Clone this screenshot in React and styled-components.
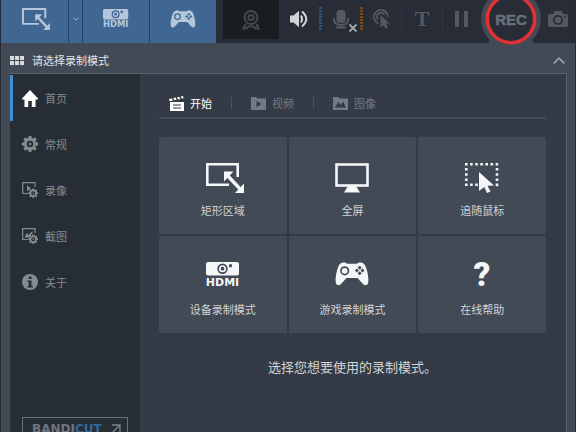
import { useState } from "react";
import styled, { createGlobalStyle } from "styled-components";

const GlobalStyle = createGlobalStyle`
* { box-sizing: border-box; }
body {
margin: 0;
background: #262c35;
overflow: hidden;
}
button {
border: 0;
padding: 0;
background: none;
color: inherit;
font: inherit;
cursor: pointer;
}
svg { display: block; flex: none; overflow: visible; }
`;

/* ---------- icons ---------- */

const RegionIcon = ({ width = 42, height = 30 }) => (
  <svg width={width} height={height} viewBox="-4 0 42 30" fill="none" stroke="currentColor" strokeWidth="2.6">
    <path d="M23 21.700H1.300V1.300H31.700V14" />
    <path d="M21 12L35 27" strokeWidth="3.400" />
    <path d="M18 8.500H27.500L18 18.500ZM38 30H29L38 20.500Z" fill="currentColor" stroke="none" />
  </svg>
);

const HdmiIcon = ({ width = 34, height = 26 }) => (
  <svg width={width} height={height} viewBox="0 0 34 26" fill="currentColor">
    <path
      fillRule="evenodd"
      d="M2 0H31A2 2 0 0 1 33 2V11.500A2 2 0 0 1 31 13.500H2A2 2 0 0 1 0 11.500V2A2 2 0 0 1 2 0ZM16.500 1.500A5.200 5.200 0 1 0 16.500 11.900A5.200 5.200 0 1 0 16.500 1.500ZM24.500 2A1.700 1.700 0 1 0 24.500 5.400A1.700 1.700 0 1 0 24.500 2Z"
    />
    <circle cx="16.500" cy="6.700" r="2.700" fill="none" stroke="currentColor" strokeWidth="1.700" />
    <text x="16.500" y="24" fontSize="11" fontWeight="700" textAnchor="middle" fontFamily="'DejaVu Sans', sans-serif">
      HDMI
    </text>
  </svg>
);

const GamepadIcon = ({ width = 34, height = 24 }) => (
  <svg width={width} height={height} viewBox="0 0 34 24" fill="currentColor">
    <path
      fillRule="evenodd"
      d="M8 .5C9.500 .2 11 .6 12 1.800H22C23 .6 24.500 .2 26 .5C28.500 1 30 2.500 31 5.500C32.500 10 34 16 33.200 20.500C32.700 23.500 30 24 28 22L22.500 16H11.500L6 22C4 24 1.300 23.500 .8 20.500C0 16 1.500 10 3 5.500C4 2.500 5.500 1 8 .5ZM9.700 4.200A4.600 4.600 0 1 0 9.700 13.400A4.600 4.600 0 1 0 9.700 4.200ZM24.700 3.700L22.700 5.700L24.700 7.700L26.700 5.700ZM24.700 9.300L22.700 11.300L24.700 13.300L26.700 11.300ZM21.900 6.500L19.900 8.500L21.900 10.500L23.900 8.500ZM27.500 6.500L25.500 8.500L27.500 10.500L29.500 8.500Z"
    />
    <circle cx="9.700" cy="8.800" r="2.900" />
  </svg>
);

const MonitorIcon = () => (
  <svg width="34" height="30" viewBox="0 0 34 30" fill="currentColor">
    <rect x="1.500" y="1.500" width="31" height="21" fill="none" stroke="currentColor" strokeWidth="2.600" />
    <path d="M13 23H21L25 29.500H9Z" />
  </svg>
);

const FollowIcon = () => (
  <svg width="34" height="30" viewBox="0 0 34 30" fill="currentColor">
    <path
      d="M0 1.300H34M0 21.700H14"
      fill="none"
      stroke="currentColor"
      strokeWidth="2.600"
      strokeDasharray="2.600 2.500"
    />
    <path d="M1.300 5V20M32 5V24" fill="none" stroke="currentColor" strokeWidth="2.600" strokeDasharray="2.600 2.600" />
    <path d="M14 9L29 22.500L22.500 22.800L25.500 28.500L22 30L19.300 24L14 28Z" />
  </svg>
);

const HelpIcon = () => (
  <svg width="34" height="30" viewBox="0 0 34 30" fill="currentColor">
    <text x="17" y="24" fontSize="33" fontWeight="900" textAnchor="middle" fontFamily="Roboto, 'DejaVu Sans', sans-serif">
      ?
    </text>
  </svg>
);

const WebcamIcon = () => (
  <svg width="18" height="20" viewBox="0 0 18 20" fill="none" stroke="currentColor" strokeWidth="2">
    <circle cx="9" cy="7.500" r="6.500" />
    <circle cx="9" cy="7.500" r="2.600" />
    <path d="M3.500 14L1.500 18.500H4.500L6.500 16.500H11.500L13.500 18.500H16.500L14.500 14" />
  </svg>
);

const SpeakerIcon = () => (
  <svg width="18" height="18" viewBox="0 0 18 18" fill="none" stroke="currentColor" strokeWidth="2">
    <path d="M0 5.500H3.500L9 .8V17.200L3.500 12.500H0Z" fill="currentColor" stroke="none" />
    <path d="M11 5.500Q13.200 9 11 12.500M12 1.500Q20.500 9 12 16.500" />
  </svg>
);

const MicIcon = () => (
  <svg width="38" height="36" viewBox="0 0 38 36" fill="none" stroke="currentColor" strokeWidth="2">
    <rect x="14.500" y="9" width="9" height="13" rx="3.500" fill="currentColor" stroke="none" />
    <path d="M12 17V19Q12.500 24 19 24Q25.500 24 26 19V17M19 24V27M14 26.500H24" />
    <path d="M27.500 23.500L34.500 30.500M34.500 23.500L27.500 30.500" stroke="#a3a7ad" strokeWidth="1.800" />
  </svg>
);

const ClickIcon = () => (
  <svg width="18" height="20" viewBox="0 0 18 20" fill="none" stroke="currentColor" strokeWidth="1.800">
    <path d="M5.500 14.500A7 7 0 1 1 15 8" />
    <path d="M5 10.500A4 4 0 1 1 11.500 6" />
    <path d="M7.500 6L16.500 14.500L13 14.800L15 18.500L12.500 19.500L10.800 16L7.500 18.500Z" fill="currentColor" stroke="none" />
  </svg>
);

const PauseIcon = () => (
  <svg width="14" height="16" viewBox="0 0 14 16" fill="currentColor">
    <path d="M0 0H4V16H0ZM9 0H13V16H9Z" />
  </svg>
);

const CameraIcon = () => (
  <svg width="20" height="16" viewBox="0 0 20 16" fill="currentColor">
    <path
      fillRule="evenodd"
      d="M2 3H5L6.500 0H13.500L15 3H18Q20 3 20 5V14Q20 16 18 16H2Q0 16 0 14V5Q0 3 2 3ZM10 4A5 5 0 1 0 10 14A5 5 0 1 0 10 4ZM17 4.500A1 1 0 1 0 17 6.500A1 1 0 1 0 17 4.500Z"
    />
    <circle cx="10" cy="9" r="3.200" />
  </svg>
);

const RecRing = () => (
  <svg width="60" height="60" viewBox="0 0 60 60">
    <circle cx="30" cy="30" r="30" fill="#424a56" />
    <path d="M4 56Q10 53 8 48H52Q50 53 56 56Z" fill="#424a56" />
    <circle cx="30" cy="30" r="23.700" fill="#272c36" stroke="#df3233" strokeWidth="3.600" />
    <text
      x="30"
      y="36"
      fontSize="15"
      fontWeight="700"
      fill="#68707a"
      stroke="#68707a"
      strokeWidth=".5"
      textAnchor="middle"
      fontFamily="'Liberation Sans', Arial, sans-serif"
    >
      REC
    </text>
  </svg>
);

const GridIcon = () => (
  <svg width="14" height="9" viewBox="0 0 14 9" fill="#d9dcdf">
    <path d="M0 0H4V4H0ZM5 0H9V4H5ZM10 0H14V4H10ZM0 5H4V9H0ZM5 5H9V9H5ZM10 5H14V9H10Z" />
  </svg>
);

const HomeIcon = () => (
  <svg width="16" height="17" viewBox="0 0 16 17" fill="#fff">
    <path d="M8 0L16 8.500V9.500H13.500V17H9.800V11H6.200V17H2.500V9.500H0V8.500Z" />
  </svg>
);

const gearTeeth = [0, 45, 90, 135, 180, 225, 270, 315];

const Gear = ({ cx, cy, size }) => (
  <g transform={`translate(${cx} ${cy}) scale(${size})`} stroke="none" fill="currentColor">
    <path
      fillRule="evenodd"
      d="M0 -6A6 6 0 1 0 0 6A6 6 0 1 0 0 -6ZM0 -3.300A3.300 3.300 0 1 1 0 3.300A3.300 3.300 0 1 1 0 -3.300Z"
    />
    {gearTeeth.map((angle) => (
      <path key={angle} d="M-1.400 -8H1.400L1.900 -5H-1.900Z" transform={`rotate(${angle})`} />
    ))}
    <circle r="1.300" />
  </g>
);

const GearIcon = () => (
  <svg width="16" height="16" viewBox="0 0 16 16">
    <Gear cx={8} cy={8} size={1} />
  </svg>
);

const VideoSettingsIcon = () => (
  <svg width="16" height="16" viewBox="0 0 16 16" fill="none" stroke="currentColor">
    <path d="M6 11.500H.7V.7H13V5" strokeWidth="1.200" />
    <path d="M5 3.200L9 6.200L5 9.200Z" fill="currentColor" stroke="none" />
    <Gear cx={11.200} cy={11.200} size={0.6} />
  </svg>
);

const ImageSettingsIcon = () => (
  <svg width="16" height="16" viewBox="0 0 16 16" fill="none" stroke="currentColor">
    <path d="M6 11.500H.7V.7H13V5" strokeWidth="1.200" />
    <path d="M2.500 9.500L4.500 5L6.500 7L10.500 2.800V5L7 9.500Z" fill="currentColor" stroke="none" />
    <Gear cx={11.200} cy={11.200} size={0.6} />
  </svg>
);

const InfoIcon = () => (
  <svg width="16" height="16" viewBox="0 0 16 16">
    <circle cx="8" cy="8" r="8" fill="currentColor" />
    <path d="M6.700 2.500H9.500V5H6.700ZM5.500 6.500H9.500V12H10.800V13.500H5.500V12H6.700V8H5.500Z" fill="#272d35" />
  </svg>
);

const ClapperIcon = () => (
  <svg width="15" height="15" viewBox="0 0 15 15" fill="currentColor">
    <path fillRule="evenodd" d="M1 6H15V15H1ZM4 8.500V9.500H12V8.500ZM4 11.500V12.500H12V11.500Z" />
    <path d="M0 3L3 2.400L4 4.600L.6 5.300ZM4.300 2.100L6.500 1.600L7.800 3.800L5.400 4.300ZM8 1.300L10.200 .8L11.500 3L9.200 3.500ZM11.700 .5L14 0L14.500 2.300L13 2.700Z" />
  </svg>
);

const VideoFolderIcon = () => (
  <svg width="15" height="13" viewBox="0 0 15 13" fill="currentColor">
    <path fillRule="evenodd" d="M0 0H5L6.500 1.500H15V13H0ZM5.500 3.800V10.200L10.500 7Z" />
  </svg>
);

const ImageFolderIcon = () => (
  <svg width="15" height="13" viewBox="0 0 15 13" fill="currentColor">
    <path fillRule="evenodd" d="M0 0H5L6.500 1.500H15V13H0ZM2 10.500H13L10 4.500L7.800 8L5.200 5Z" />
  </svg>
);

const OpenIcon = () => (
  <svg width="10" height="10" viewBox="0 0 10 10" fill="none" stroke="#7d838b" strokeWidth="1.300">
    <path d="M1 1H9V9M9 1L1 9" />
  </svg>
);

const Chevron = ({ up, width, height }) => (
  <svg width={width} height={height} viewBox="0 0 10 6" fill="none" stroke="currentColor" strokeWidth="1.500">
    <path d={up ? "M.5 5.500L5 1L9.500 5.500" : "M1 1L5 5L9 1"} />
  </svg>
);

/* ---------- data ---------- */

const menu = [
  { label: "首页", icon: <HomeIcon /> },
  { label: "常规", icon: <GearIcon /> },
  { label: "录像", icon: <VideoSettingsIcon /> },
  { label: "截图", icon: <ImageSettingsIcon /> },
  { label: "关于", icon: <InfoIcon /> },
];

const tabs = [
  { label: "开始", icon: <ClapperIcon /> },
  { label: "视频", icon: <VideoFolderIcon /> },
  { label: "图像", icon: <ImageFolderIcon /> },
];

const modes = [
  { label: "矩形区域", icon: <RegionIcon /> },
  { label: "全屏", icon: <MonitorIcon /> },
  { label: "追随鼠标", icon: <FollowIcon /> },
  { label: "设备录制模式", icon: <HdmiIcon /> },
  { label: "游戏录制模式", icon: <GamepadIcon /> },
  { label: "在线帮助", icon: <HelpIcon /> },
];

function App() {
  const [page, setPage] = useState("首页");
  const [tab, setTab] = useState("开始");

  return (
    <AppStyled>
      <GlobalStyle />
      <Toolbar>
        <ModeButtons>
          <ModeButton $width={67} aria-label="矩形区域"><RegionIcon width={31} height={22} /></ModeButton>
          <ModeButton $width={13} aria-label="更多"><Chevron width={6} height={4} /></ModeButton>
          <ModeButton $width={66} aria-label="设备录制模式"><HdmiIcon width={26} height={20} /></ModeButton>
          <ModeButton $width={66} aria-label="游戏录制模式"><GamepadIcon width={26} height={18} /></ModeButton>
        </ModeButtons>
        <WebcamButton aria-label="摄像头"><WebcamIcon /></WebcamButton>
        <ToolButton $width={40} $bright aria-label="扬声器"><SpeakerIcon /></ToolButton>
        <Meter $color="#285680" />
        <ToolButton $width={38} aria-label="麦克风"><MicIcon /></ToolButton>
        <Meter $color="#7b4a16" />
        <ToolButton $width={38} aria-label="鼠标效果"><ClickIcon /></ToolButton>
        <ToolDivider />
        <TextButton $width={40}>T</TextButton>
        <ToolDivider />
        <ToolButton $width={38} aria-label="暂停"><PauseIcon /></ToolButton>
        <Spacer />
        <RecButton aria-label="REC"><RecRing /></RecButton>
        <ToolButton $width={34} aria-label="截图"><CameraIcon /></ToolButton>
      </Toolbar>

      <PanelHeader>
        <GridIcon />
        <PanelTitle>请选择录制模式</PanelTitle>
        <CollapseButton aria-label="收起"><Chevron up width={12} height={7} /></CollapseButton>
      </PanelHeader>

      <PanelBody>
        <Sidebar>
          {menu.map((item) => (
            <MenuItem key={item.label} $active={item.label === page} onClick={() => setPage(item.label)}>
              {item.icon}
              {item.label}
            </MenuItem>
          ))}
          <Bandicut href="#bandicut">
            <span>BANDI<Cut>CUT</Cut></span>
            <OpenIcon />
          </Bandicut>
        </Sidebar>

        <Content>
          <Tabs>
            {tabs.map((item) => (
              <Tab key={item.label} $active={item.label === tab} onClick={() => setTab(item.label)}>
                {item.icon}
                {item.label}
              </Tab>
            ))}
          </Tabs>
          <ModeGrid>
            {modes.map((mode) => (
              <ModeTile key={mode.label}>
                <TileIcon>{mode.icon}</TileIcon>
                {mode.label}
              </ModeTile>
            ))}
          </ModeGrid>
          <Hint>选择您想要使用的录制模式。</Hint>
        </Content>
      </PanelBody>
    </AppStyled>
  );
}

const AppStyled = styled.div`
height: 100vh;
overflow: hidden;
border: solid #242a33;
border-width: 0 1px;
background: #424a56;
color: #d0d3d7;
font: 11px/16px "Noto Sans CJK SC", sans-serif;
`;
const Toolbar = styled.header`
display: flex;
align-items: center;
height: 43px;
padding-bottom: 6px;
background: #272c36;
color: #535962;
`;
const ModeButtons = styled.div`
display: flex;
align-self: flex-start;
gap: 1px;
height: 43px;
margin-right: 7px;
background: #27405f;
`;
const ModeButton = styled.button`
display: flex;
align-items: center;
justify-content: center;
width: ${(props) => props.$width}px;
padding-bottom: 6px;
background: #406692;
color: #b4c6d9;
`;
const ToolButton = styled.button`
display: flex;
align-items: center;
justify-content: center;
flex: none;
width: ${(props) => props.$width}px;
height: 36px;
color: ${(props) => (props.$bright ? "#d2d5d8" : "inherit")};
`;
const TextButton = styled(ToolButton)`
font: bold 22px/36px "Liberation Serif", serif;
`;
const WebcamButton = styled.button`
display: flex;
align-items: center;
justify-content: center;
align-self: flex-start;
width: 56px;
height: 39px;
background: #191c20;
color: #464a50;
`;
const Meter = styled.span`
width: 3px;
height: 24px;
background: repeating-linear-gradient(${(props) => props.$color} 0 2px, #272c36 2px 3px);
`;
const ToolDivider = styled.span`
width: 1px;
height: 24px;
background: #30363f;
`;
const Spacer = styled.span`
flex: 1;
`;
const RecButton = styled.button`
flex: none;
margin: -12px 0;
border-radius: 50%;
`;
const PanelHeader = styled.div`
display: flex;
align-items: center;
gap: 8px;
height: 30px;
padding: 4px 10px 0 9px;
`;
const PanelTitle = styled.h1`
flex: 1;
margin: 0;
font-size: 11px;
font-weight: 400;
color: #e0e2e4;
`;
const CollapseButton = styled.button`
color: #9aa1aa;
`;
const PanelBody = styled.div`
display: flex;
margin: 0 8px 0 9px;
border: solid #58616d;
border-width: 1px 1px 0 0;
background: #343b46;
`;
const Sidebar = styled.nav`
display: flex;
flex-direction: column;
flex: none;
width: 130px;
padding: 1px 0 20px;
background: #272d35;
`;
const MenuItem = styled.button`
display: flex;
align-items: center;
gap: 7px;
height: 46px;
padding-left: 9px;
border-left: 3px solid ${(props) => (props.$active ? "#3f8fd2" : "transparent")};
color: #858b93;
`;
const Bandicut = styled.a`
display: flex;
align-items: center;
justify-content: space-between;
height: 23px;
margin: 112px 12px 0;
padding: 0 6px 0 9px;
border: 1px solid #6b7179;
color: #70767e;
font: bold 12px/16px "DejaVu Sans", sans-serif;
text-decoration: none;
`;
const Cut = styled.span`
color: #33689c;
`;
const Content = styled.main`
flex: 1;
padding: 20px 20px 0 19px;
`;
const Tabs = styled.div`
display: flex;
gap: 19px;
height: 25px;
padding-left: 10px;
border-bottom: 2px solid #434c58;
`;
const Tab = styled.button`
display: flex;
align-items: center;
gap: 6px;
height: 18px;
color: ${(props) => (props.$active ? "#ffffff" : "#737a84")};
&:not(:last-child)::after {
content: "";
width: 1px;
height: 12px;
margin-left: 13px;
background: #4b535e;
}
`;
const ModeGrid = styled.div`
display: grid;
grid-template-columns: repeat(3, 1fr);
grid-auto-rows: 97px;
gap: 2px;
margin-top: 18px;
`;
const ModeTile = styled.button`
display: flex;
flex-direction: column;
align-items: center;
gap: 9px;
padding-top: 26px;
border-radius: 2px;
background: #424a55;
`;
const TileIcon = styled.span`
height: 30px;
color: #f4f6f8;
`;
const Hint = styled.p`
margin: 24px 0 0;
font-size: 13px;
line-height: 20px;
text-align: center;
`;
export default App;
